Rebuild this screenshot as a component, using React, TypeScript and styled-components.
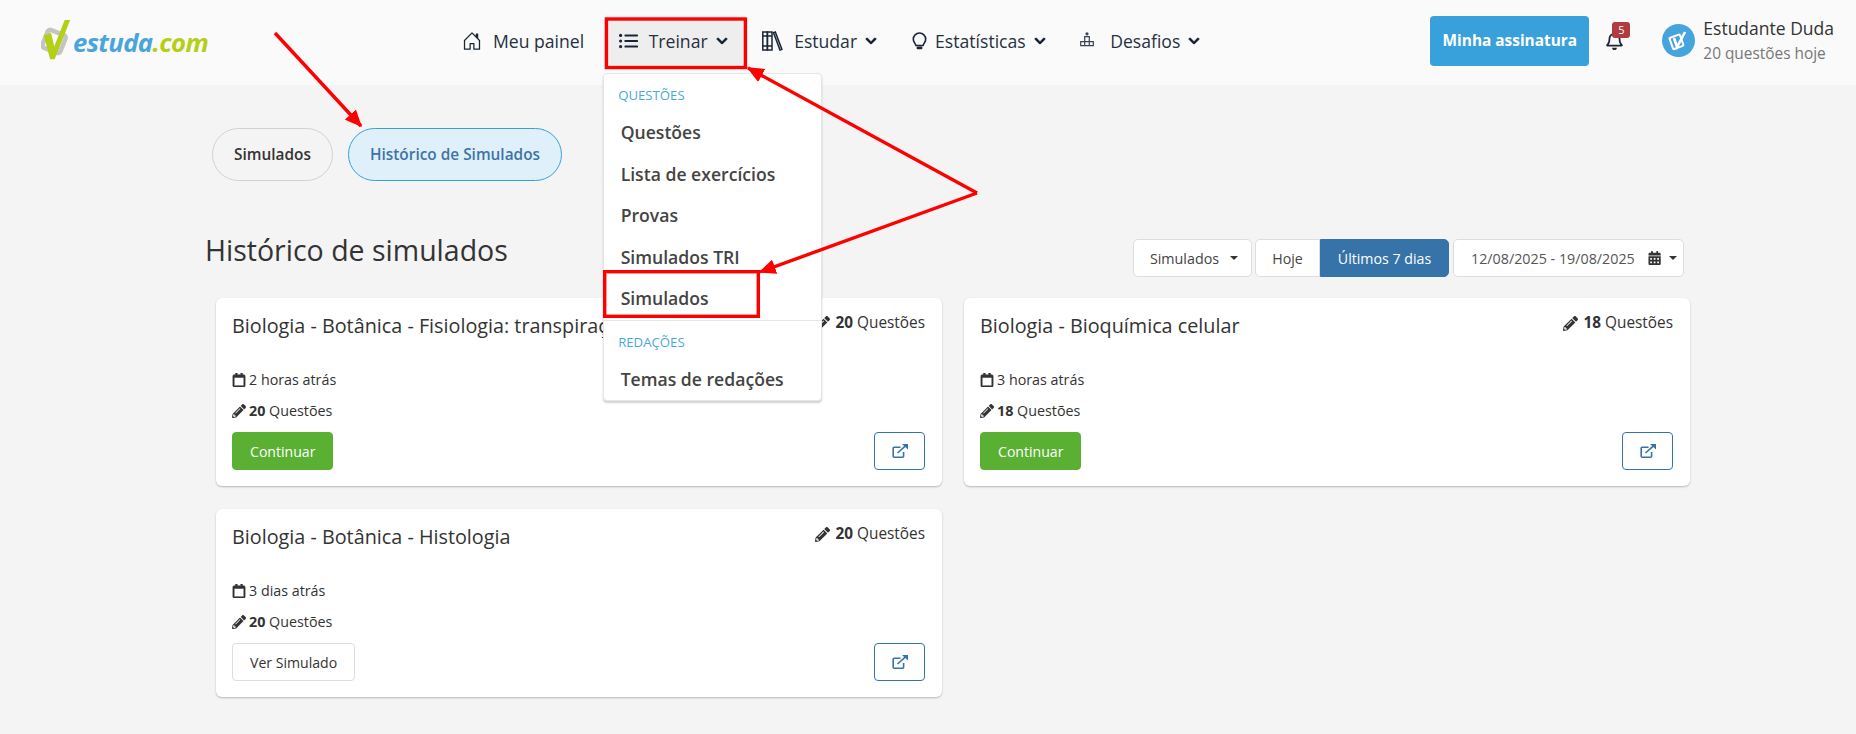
import { createGlobalStyle, styled } from 'styled-components';
import { BsHouseDoor } from 'react-icons/bs';
import { FaCalendarAlt, FaChevronDown, FaPencilAlt, FaRegBell, FaRegCalendar } from 'react-icons/fa';

const GlobalStyle = createGlobalStyle`
  * {
    box-sizing: border-box;
  }

  body {
    margin: 0;
    font-family: 'Open Sans', 'Noto Sans', sans-serif;
    color: #333;
    background: #f4f4f4;
  }
`;

const ListIcon = () => (
  <svg width="19" height="16" viewBox="0 0 19 16" fill="#1a2636">
    <circle cx="1.6" cy="2.4" r="1.6" />
    <circle cx="1.6" cy="8" r="1.6" />
    <circle cx="1.6" cy="13.6" r="1.6" />
    <rect x="5.5" y="1.4" width="13.5" height="2" rx="0.6" />
    <rect x="5.5" y="7" width="13.5" height="2" rx="0.6" />
    <rect x="5.5" y="12.6" width="13.5" height="2" rx="0.6" />
  </svg>
);

const BooksIcon = () => (
  <svg width="21" height="20" viewBox="0 0 21 20" fill="none" stroke="#1a2636" strokeWidth="1.5">
    <rect x="0.8" y="1" width="4.6" height="18" />
    <rect x="5.4" y="1" width="4.6" height="18" />
    <path d="M0.8 5h9.2M0.8 15h9.2M11.5 1.6l1.8-.6 6.6 17.4-1.9.7z" />
  </svg>
);

const BulbIcon = () => (
  <svg width="15" height="18" viewBox="0 0 15 18" fill="none" stroke="#1a2636" strokeWidth="1.6">
    <path d="M7.5 1a6.2 6.2 0 0 0-6.2 6.2c0 2.5 1.8 3.8 2.6 6.3h7.2c.8-2.5 2.6-3.8 2.6-6.3A6.2 6.2 0 0 0 7.5 1z" />
    <rect x="4.6" y="14.6" width="5.8" height="2.6" rx="1" fill="#1a2636" stroke="none" />
  </svg>
);

const PodiumIcon = () => (
  <svg width="14" height="18" viewBox="0 0 14 18" fill="none" stroke="#3a4452" strokeWidth="1.2">
    <circle cx="7" cy="1.8" r="1.6" fill="#3a4452" stroke="none" />
    <path d="M4.7 4.6h4.6v5H4.7zM.7 9.6h12.6v4.1H.7zM4.7 9.6v4.1M9.3 9.6v4.1" />
  </svg>
);

const OpenIcon = () => (
  <svg width="16" height="14" viewBox="0 0 16 14" fill="none" stroke="#3673a8" strokeWidth="1.6">
    <path d="M8.5 3.2H2.2a1 1 0 0 0-1 1v8a1 1 0 0 0 1 1h8.4a1 1 0 0 0 1-1V8" />
    <path d="M5.5 9L13.5 1.8" />
    <path d="M10 0h6v5.6z" fill="#3673a8" stroke="none" />
  </svg>
);

const Logo = () => (
  <LogoLink>
    <svg width="31" height="44" viewBox="0 0 34 44">
      <rect x="4" y="13" width="21" height="21" rx="3" transform="rotate(22 14 23)" fill="none" stroke="#c4c4c4" strokeWidth="5" />
      <path d="M3 17l8-3 3.5 15L26 0h6L15 43h-5z" fill="#b5cf17" />
    </svg>
    <LogoText>
      estuda<LogoAccent>.com</LogoAccent>
    </LogoText>
  </LogoLink>
);

const NAV_ITEMS = [
  { label: 'Treinar', icon: <ListIcon />, gap: 11, active: true },
  { label: 'Estudar', icon: <BooksIcon />, gap: 11 },
  { label: 'Estatísticas', icon: <BulbIcon />, gap: 8.5 },
  { label: 'Desafios', icon: <PodiumIcon />, gap: 16 },
];

const TREINAR_MENU = ['Questões', 'Lista de exercícios', 'Provas', 'Simulados TRI', 'Simulados'];

const HISTORY = [
  { title: 'Biologia - Botânica - Fisiologia: transpiração', age: '2 horas atrás', total: 20, finished: false },
  { title: 'Biologia - Bioquímica celular', age: '3 horas atrás', total: 18, finished: false },
  { title: 'Biologia - Botânica - Histologia', age: '3 dias atrás', total: 20, finished: true },
];

const App = () => (
  <Page>
    <GlobalStyle />
    <Header>
      <Logo />
      <Nav>
        <NavItem>
          <NavIcon $gap={11}>
            <BsHouseDoor size={20} />
          </NavIcon>
          Meu painel
        </NavItem>
        {NAV_ITEMS.map(({ label, icon, gap, active }) => (
          <NavItem key={label} $active={active}>
            <NavIcon $gap={gap}>{icon}</NavIcon>
            {label}
            <Chevron />
            {active && (
              <Dropdown>
                <MenuLabel>Questões</MenuLabel>
                {TREINAR_MENU.map((item) => (
                  <MenuItem key={item}>{item}</MenuItem>
                ))}
                <MenuDivider />
                <MenuLabel>Redações</MenuLabel>
                <MenuItem>Temas de redações</MenuItem>
              </Dropdown>
            )}
          </NavItem>
        ))}
      </Nav>
      <UserArea>
        <SubscribeButton type="button">Minha assinatura</SubscribeButton>
        <Bell>
          <FaRegBell size={19} />
          <BellBadge>5</BellBadge>
        </Bell>
        <Avatar>
          <svg width="33" height="33" viewBox="0 0 33 33">
            <circle cx="16.5" cy="16.5" r="16.5" fill="#45a3dd" />
            <rect x="9" y="12" width="11" height="12" rx="1" transform="rotate(-20 14 18)" fill="none" stroke="#fff" strokeWidth="2" />
            <path d="M12 14l3 9 8-15" fill="none" stroke="#fff" strokeWidth="2.6" />
          </svg>
        </Avatar>
        <UserText>
          <UserName>Estudante Duda</UserName>
          <UserStats>20 questões hoje</UserStats>
        </UserText>
      </UserArea>
    </Header>

    <Main>
      <Tabs>
        <Tab>Simulados</Tab>
        <Tab $active>Histórico de Simulados</Tab>
      </Tabs>

      <TitleRow>
        <PageTitle>Histórico de simulados</PageTitle>
        <Filters>
          <TypeButton type="button">
            Simulados
            <Caret />
          </TypeButton>
          <RangeGroup>
            <RangeButton type="button">Hoje</RangeButton>
            <RangeButton type="button" $active>
              Últimos 7 dias
            </RangeButton>
          </RangeGroup>
          <DateButton type="button">
            12/08/2025 - 19/08/2025
            <FaCalendarAlt size={14} color="#333" />
            <Caret />
          </DateButton>
        </Filters>
      </TitleRow>

      <CardGrid>
        {HISTORY.map(({ title, age, total, finished }) => (
          <Card key={title}>
            <CardHead>
              <CardTitle>{title}</CardTitle>
              <Count>
                <FaPencilAlt size={15} />
                <b>{total}</b> Questões
              </Count>
            </CardHead>
            <MetaRow>
              <CalendarGlyph />
              {age}
            </MetaRow>
            <MetaRow>
              <FaPencilAlt size={14} />
              <span>
                <b>{total}</b> Questões
              </span>
            </MetaRow>
            <CardFooter>
              <ActionButton type="button" $finished={finished}>
                {finished ? 'Ver Simulado' : 'Continuar'}
              </ActionButton>
              <OpenButton type="button" aria-label="Abrir">
                <OpenIcon />
              </OpenButton>
            </CardFooter>
          </Card>
        ))}
      </CardGrid>
    </Main>

    {/* marcações em vermelho feitas por cima do print */}
    <Annotations viewBox="0 0 1856 734">
      <defs>
        <marker id="head" markerWidth="5" markerHeight="4.4" refX="4.6" refY="2.2" orient="auto">
          <path d="M0 0L5 2.2L0 4.4z" fill="#f00" />
        </marker>
      </defs>
      <g fill="none" stroke="#f00" strokeWidth="3.4">
        <rect x="606.4" y="19" width="139" height="48.5" />
        <rect x="604.7" y="271.7" width="153.6" height="44.6" />
        <path d="M275 33L361 126" markerEnd="url(#head)" />
        <path d="M977 193L748 68" markerEnd="url(#head)" />
        <path d="M977 193L760 272" markerEnd="url(#head)" />
      </g>
    </Annotations>
  </Page>
);

export default App;

const Page = styled.div`
  position: relative;
  width: 1856px;
  height: 734px;
  overflow: hidden;
`;

const Header = styled.header`
  display: flex;
  align-items: center;
  height: 85px;
  padding: 0 22px 4px 41px;
  background-color: #fafafa;
`;

const LogoLink = styled.div`
  display: flex;
  align-items: center;
  width: 407px;
  margin-top: -2px;
`;

const LogoText = styled.span`
  margin: 6px 0 0 1px;
  font-family: 'Noto Sans', sans-serif;
  font-size: 25.7px;
  font-style: italic;
  font-weight: 700;
  letter-spacing: -0.6px;
  color: #4aa5dc;
`;

const LogoAccent = styled.span`
  color: #b5cf17;
`;

const Nav = styled.nav`
  display: flex;
  gap: 4.5px;
`;

const NavItem = styled.div<{ $active?: boolean }>`
  position: relative;
  display: flex;
  align-items: center;
  height: 49px;
  padding: 0 16px 0 14px;
  font-size: 17.6px;
  color: #26303f;
  background-color: ${({ $active }) => ($active ? '#eee' : 'transparent')};
  border-radius: 4px;
`;

const NavIcon = styled.span<{ $gap: number }>`
  display: flex;
  align-items: center;
  margin-right: ${({ $gap }) => $gap}px;
  color: #1a2636;
`;

const Chevron = styled(FaChevronDown)`
  width: 12px;
  height: 12px;
  margin-left: 8px;
  color: #0f1c2e;
  stroke: currentColor;
  stroke-width: 30px;
`;

const Dropdown = styled.div`
  position: absolute;
  z-index: 2;
  top: 57px;
  left: -1.5px;
  width: 219px;
  height: 328px;
  padding-top: 11px;
  background-color: #fff;
  border: 1px solid #e6e6e6;
  border-radius: 4px;
  box-shadow: 0 2px 2px rgba(0, 0, 0, 0.18);
`;

const MenuLabel = styled.div`
  height: 20px;
  margin-bottom: 7px;
  padding-left: 14px;
  font-size: 13.2px;
  line-height: 20px;
  color: #4aa8e0;
  text-transform: uppercase;
`;

const MenuItem = styled.div`
  height: 41.6px;
  padding-left: 16.5px;
  font-size: 17.6px;
  font-weight: 600;
  line-height: 41.6px;
  color: #444;
`;

const MenuDivider = styled.hr`
  height: 1px;
  margin: 0 0 11px;
  background-color: #e6e6e6;
  border: none;
`;

const UserArea = styled.div`
  display: flex;
  align-items: center;
  margin-left: auto;
`;

const SubscribeButton = styled.button`
  width: 159px;
  height: 50px;
  font-family: inherit;
  font-size: 15.4px;
  font-weight: 700;
  color: #fff;
  background-color: #38a1dc;
  border: none;
  border-radius: 4px;
`;

const Bell = styled.div`
  position: relative;
  display: flex;
  margin: 0 38px 0 16px;
  color: #1a2636;
`;

const BellBadge = styled.span`
  position: absolute;
  top: -9px;
  left: 7px;
  width: 18px;
  height: 16px;
  font-size: 11px;
  line-height: 16px;
  color: #fff;
  text-align: center;
  background-color: #b23b3f;
  border-radius: 3px;
`;

const Avatar = styled.div`
  display: flex;
  margin: 0 8px 0 0;
`;

const UserText = styled.div`
  display: flex;
  flex-direction: column;
  gap: 3px;
`;

const UserName = styled.span`
  font-size: 17.5px;
  line-height: 23px;
  color: #333;
`;

const UserStats = styled.span`
  font-size: 15.4px;
  line-height: 21px;
  color: #777;
`;

const Main = styled.main`
  padding: 43px 166px 0 205px;
`;

const Tabs = styled.div`
  display: flex;
  gap: 15px;
  padding-left: 7px;
`;

const Tab = styled.div<{ $active?: boolean }>`
  height: 53px;
  padding: 0 21px;
  font-size: 15.4px;
  font-weight: 600;
  line-height: 51px;
  color: ${({ $active }) => ($active ? '#3d74a8' : '#333')};
  background-color: ${({ $active }) => ($active ? '#dff0fa' : 'transparent')};
  border: 1px solid ${({ $active }) => ($active ? '#38a1dc' : '#ced2d8')};
  border-radius: 27px;
`;

const TitleRow = styled.div`
  display: flex;
  align-items: flex-start;
  justify-content: space-between;
  height: 117px;
  padding: 58px 6px 0 0;
`;

const PageTitle = styled.h1`
  margin: -9px 0 0;
  font-size: 28.5px;
  font-weight: 400;
  line-height: 40px;
  color: #333;
`;

const Filters = styled.div`
  display: flex;
  gap: 4px;
`;

const FilterButton = styled.button`
  display: flex;
  align-items: center;
  justify-content: center;
  height: 38px;
  font-family: inherit;
  font-size: 14.3px;
  color: #444;
  white-space: nowrap;
  background-color: #fff;
  border: 1px solid #ddd;
  border-radius: 5px;
`;

const TypeButton = styled(FilterButton)`
  width: 119px;
  margin-right: -1px;
  padding-left: 9px;
`;

const DateButton = styled(FilterButton)`
  gap: 13px;
  justify-content: flex-start;
  width: 231px;
  padding-left: 17px;
  color: #555;
`;

const Caret = styled.span`
  width: 0;
  height: 0;
  margin-left: 11px;
  border-top: 4px solid #333;
  border-right: 4px solid transparent;
  border-left: 4px solid transparent;

  ${DateButton} & {
    margin-left: -5px;
  }
`;

const RangeGroup = styled.div`
  display: flex;
`;

const RangeButton = styled.button<{ $active?: boolean }>`
  width: ${({ $active }) => ($active ? '129px' : '65px')};
  height: 38px;
  padding: 0;
  font-family: inherit;
  font-size: 14.2px;
  color: ${({ $active }) => ($active ? '#fff' : '#444')};
  background-color: ${({ $active }) => ($active ? '#3673a8' : '#fff')};
  border: 1px solid ${({ $active }) => ($active ? '#3673a8' : '#ddd')};
  border-radius: ${({ $active }) => ($active ? '0 5px 5px 0' : '5px 0 0 5px')};
`;

const CardGrid = styled.div`
  display: grid;
  grid-template-columns: 726px 726px;
  gap: 23px 22px;
  padding-left: 11px;
`;

const Card = styled.article`
  height: 188px;
  padding: 16px;
  background-color: #fff;
  border-radius: 6px;
  box-shadow: 0 1px 2px rgba(0, 0, 0, 0.25);
`;

const CardHead = styled.div`
  display: flex;
  align-items: flex-start;
  justify-content: space-between;
  height: 50px;
`;

const CardTitle = styled.h2`
  margin: 0;
  font-size: 19.8px;
  font-weight: 400;
  line-height: 24px;
  color: #333;
`;

const Count = styled.div`
  display: flex;
  align-items: center;
  gap: 5px;
  margin: -1px 1px 0 0;
  font-size: 15.36px;
  line-height: 20px;
  color: #333;

  b {
    margin-right: -1px;
  }
`;

const MetaRow = styled.div`
  display: flex;
  align-items: center;
  gap: 3px;
  height: 31px;
  font-size: 14.3px;
  color: #333;
`;

const CalendarGlyph = styled(FaRegCalendar)`
  width: 14px;
  height: 14px;
  stroke: currentColor;
  stroke-width: 20px;
`;

const CardFooter = styled.div`
  display: flex;
  align-items: center;
  justify-content: space-between;
  margin-top: 6px;
`;

const ActionButton = styled.button<{ $finished?: boolean }>`
  height: 38px;
  padding: 0 17px;
  font-family: inherit;
  font-size: 14.1px;
  color: ${({ $finished }) => ($finished ? '#333' : '#fff')};
  background-color: ${({ $finished }) => ($finished ? '#fff' : '#5ab033')};
  border: 1px solid ${({ $finished }) => ($finished ? '#ddd' : '#5ab033')};
  border-radius: 4px;
`;

const OpenButton = styled.button`
  display: flex;
  align-items: center;
  justify-content: center;
  width: 51px;
  height: 38px;
  margin-right: 1px;
  padding: 0;
  background-color: #fff;
  border: 1px solid #3673a8;
  border-radius: 4px;
`;

const Annotations = styled.svg`
  position: absolute;
  z-index: 3;
  top: 0;
  left: 0;
  width: 1856px;
  height: 734px;
  pointer-events: none;
`;
